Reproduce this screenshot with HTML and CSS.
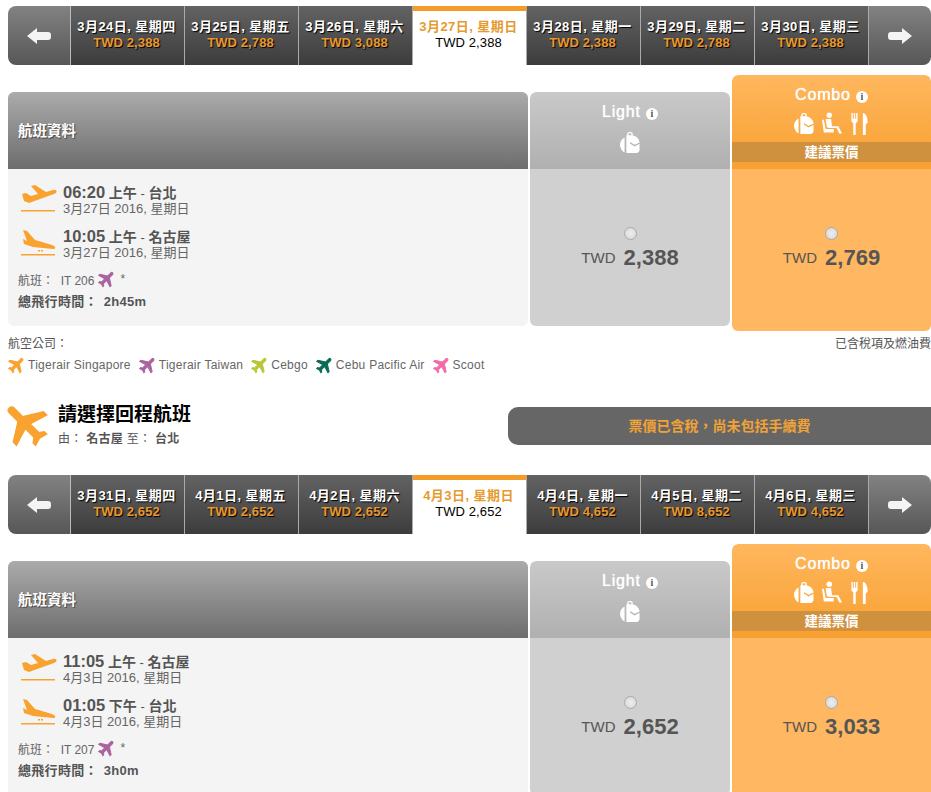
FILE: index.html
```html
<!DOCTYPE html>
<html lang="zh-Hant">
<head>
<meta charset="utf-8">
<title>航班</title>
<link rel="stylesheet" href="styles.css">
</head>
<body>
<svg class="defs" width="0" height="0">
  <defs>
    <symbol id="plane" viewBox="0 0 24 24"><path d="M21 16v-2l-8-5V3.5c0-.83-.67-1.5-1.500-1.500S10 2.670 10 3.500V9l-8 5v2l8-2.500V19l-2 1.500V22l3.500-1 3.500 1v-1.500L13 19v-5.500l8 2.500z"/></symbol>
    <symbol id="takeoff" viewBox="0 0 36 28"><path d="M1 9l4-1 5 3 7-2-7-8 4-1 11 7 7-2c2-.5 4 .5 3.500 2-.4 1.300-2 2-4 2.600L8 18 3 16z"/><rect y="25" width="34" height="1.500"/></symbol>
    <symbol id="landing" viewBox="0 0 36 28"><path d="M2 1l4 1 8 9 7 2c4 1 10 3 12 4 2 1 1.500 3-.5 3L12 18 3 15l-1-5 4 2z"/><rect x="17" y="21" width="2" height="1.500"/><rect x="20" y="21" width="2" height="1.500"/><rect y="25" width="34" height="1.500"/></symbol>
    <symbol id="bag" viewBox="0 0 22 24"><path fill-rule="evenodd" d="M8 4V2.500C8 1.300 9 .5 10 .5h2c1.200 0 2 .8 2 2V4.300c4 .7 7.500 3.700 7.500 8.200V20c0 2-1.500 3.500-3.500 3.500H7V4zM9.500 4h3V2.500c0-.4-.2-.6-.5-.6h-2c-.3 0-.5.2-.5.6zM11 11.500l5 3 5.500-2.500v1.500L16 16.500l-5-3.500z"/><path d="M5 6.500v16.500C2 21.500 0 18 0 14.500S2 8 5 6.500z"/></symbol>
    <symbol id="seat" viewBox="0 0 22 24"><circle cx="8" cy="3" r="3"/><path d="M4 7h6l1 8h7l4 8h-3l-3-6H8c-2 0-3-1-3-3z"/><path d="M0 8h2l2 10h9v4H2z"/></symbol>
    <symbol id="meal" viewBox="0 0 20 24"><path d="M1 1h1.500v6h1V1H5v6h1V1h1.500v8c0 1-1 2-2 2.500V24H3V11.500C2 11 1 10 1 9z"/><path d="M13 1c3 0 5 4 5 10l-2 2v11h-3z"/></symbol>
  </defs>
</svg>

<section class="leg">
  <nav class="dates">
    <a class="arrow arrow-left"><svg viewBox="0 0 24 18" class="arrow-icon"><path d="M0 9l10-8v4h11c2 0 3 1 3 3v2c0 2-1 3-3 3H10v4z"/></svg></a>
    <a class="date"><b>3月24日, 星期四</b><span>TWD 2,388</span></a>
    <a class="date"><b>3月25日, 星期五</b><span>TWD 2,788</span></a>
    <a class="date"><b>3月26日, 星期六</b><span>TWD 3,088</span></a>
    <a class="date active"><b>3月27日, 星期日</b><span>TWD 2,388</span></a>
    <a class="date"><b>3月28日, 星期一</b><span>TWD 2,388</span></a>
    <a class="date"><b>3月29日, 星期二</b><span>TWD 2,788</span></a>
    <a class="date"><b>3月30日, 星期三</b><span>TWD 2,388</span></a>
    <a class="arrow arrow-right"><svg viewBox="0 0 24 18" class="arrow-icon"><path d="M24 9l-10-8v4H3C1 5 0 6 0 8v2c0 2 1 3 3 3h11v4z"/></svg></a>
  </nav>
  <div class="fares">
    <div class="flight-col">
      <header class="flight-head">航班資料</header>
      <div class="flight-body">
        <div class="stop">
          <svg class="stop-icon"><use href="#takeoff"/></svg>
          <div class="stop-text"><div class="stop-line"><strong>06:20</strong> <em>上午</em> - <em>台北</em></div><div class="stop-date">3月27日 2016, 星期日</div></div>
        </div>
        <div class="stop">
          <svg class="stop-icon"><use href="#landing"/></svg>
          <div class="stop-text"><div class="stop-line"><strong>10:05</strong> <em>上午</em> - <em>名古屋</em></div><div class="stop-date">3月27日 2016, 星期日</div></div>
        </div>
        <div class="flight-no">航班：&nbsp; IT 206 <svg class="plane tw"><use href="#plane"/></svg> *</div>
        <div class="duration">總飛行時間： 2h45m</div>
      </div>
    </div>
    <div class="fare light">
      <header class="fare-head">
        <div class="fare-name">Light <i class="info">i</i></div>
        <div class="fare-icons"><svg class="ico"><use href="#bag"/></svg></div>
      </header>
      <div class="fare-body"><span class="radio"></span><div class="price"><small>TWD</small> 2,388</div></div>
    </div>
    <div class="fare combo">
      <header class="fare-head">
        <div class="fare-name">Combo <i class="info">i</i></div>
        <div class="fare-icons"><svg class="ico"><use href="#bag"/></svg><svg class="ico"><use href="#seat"/></svg><svg class="ico"><use href="#meal"/></svg></div>
        <div class="band">建議票價</div>
      </header>
      <div class="fare-body"><span class="radio"></span><div class="price"><small>TWD</small> 2,769</div></div>
    </div>
  </div>
  <div class="notes">
    <span>航空公司：</span><span>已含稅項及燃油費</span>
  </div>
  <ul class="airlines">
    <li><svg class="plane sg"><use href="#plane"/></svg>Tigerair Singapore</li>
    <li><svg class="plane tw"><use href="#plane"/></svg>Tigerair Taiwan</li>
    <li><svg class="plane cg"><use href="#plane"/></svg>Cebgo</li>
    <li><svg class="plane cp"><use href="#plane"/></svg>Cebu Pacific Air</li>
    <li><svg class="plane sc"><use href="#plane"/></svg>Scoot</li>
  </ul>
  <div class="return">
    <svg class="return-plane"><use href="#plane"/></svg>
    <div class="return-text">
      <h2>請選擇回程航班</h2>
      <p>由： <b>名古屋</b> 至： <b>台北</b></p>
    </div>
    <div class="tax-note">票價已含稅，尚未包括手續費</div>
  </div>
</section>

<section class="leg">
  <nav class="dates">
    <a class="arrow arrow-left"><svg viewBox="0 0 24 18" class="arrow-icon"><path d="M0 9l10-8v4h11c2 0 3 1 3 3v2c0 2-1 3-3 3H10v4z"/></svg></a>
    <a class="date"><b>3月31日, 星期四</b><span>TWD 2,652</span></a>
    <a class="date"><b>4月1日, 星期五</b><span>TWD 2,652</span></a>
    <a class="date"><b>4月2日, 星期六</b><span>TWD 2,652</span></a>
    <a class="date active"><b>4月3日, 星期日</b><span>TWD 2,652</span></a>
    <a class="date"><b>4月4日, 星期一</b><span>TWD 4,652</span></a>
    <a class="date"><b>4月5日, 星期二</b><span>TWD 8,652</span></a>
    <a class="date"><b>4月6日, 星期三</b><span>TWD 4,652</span></a>
    <a class="arrow arrow-right"><svg viewBox="0 0 24 18" class="arrow-icon"><path d="M24 9l-10-8v4H3C1 5 0 6 0 8v2c0 2 1 3 3 3h11v4z"/></svg></a>
  </nav>
  <div class="fares">
    <div class="flight-col">
      <header class="flight-head">航班資料</header>
      <div class="flight-body">
        <div class="stop">
          <svg class="stop-icon"><use href="#takeoff"/></svg>
          <div class="stop-text"><div class="stop-line"><strong>11:05</strong> <em>上午</em> - <em>名古屋</em></div><div class="stop-date">4月3日 2016, 星期日</div></div>
        </div>
        <div class="stop">
          <svg class="stop-icon"><use href="#landing"/></svg>
          <div class="stop-text"><div class="stop-line"><strong>01:05</strong> <em>下午</em> - <em>台北</em></div><div class="stop-date">4月3日 2016, 星期日</div></div>
        </div>
        <div class="flight-no">航班：&nbsp; IT 207 <svg class="plane tw"><use href="#plane"/></svg> *</div>
        <div class="duration">總飛行時間： 3h0m</div>
      </div>
    </div>
    <div class="fare light">
      <header class="fare-head">
        <div class="fare-name">Light <i class="info">i</i></div>
        <div class="fare-icons"><svg class="ico"><use href="#bag"/></svg></div>
      </header>
      <div class="fare-body"><span class="radio"></span><div class="price"><small>TWD</small> 2,652</div></div>
    </div>
    <div class="fare combo">
      <header class="fare-head">
        <div class="fare-name">Combo <i class="info">i</i></div>
        <div class="fare-icons"><svg class="ico"><use href="#bag"/></svg><svg class="ico"><use href="#seat"/></svg><svg class="ico"><use href="#meal"/></svg></div>
        <div class="band">建議票價</div>
      </header>
      <div class="fare-body"><span class="radio"></span><div class="price"><small>TWD</small> 3,033</div></div>
    </div>
  </div>
</section>
</body>
</html>
```
FILE: styles.css
```css
* { box-sizing: border-box; }
html, body { margin: 0; height: 792px; overflow: hidden; background: #fff; }
body { font-family: "Liberation Sans", "Noto Sans CJK TC", sans-serif; color: #555; font-size: 12px; }
.defs { position: absolute; }

.leg { padding: 6px 0 0 8px; }

/* date bar */
.dates { display: grid; grid-template-columns: 63px repeat(7, 114px) 62px; height: 59px; }
.arrow { display: flex; align-items: center; justify-content: center; background: linear-gradient(#828282, #575757); }
.arrow-left { border-radius: 8px 0 0 8px; border-right: 1px solid #bbb; }
.arrow-right { border-radius: 0 8px 8px 0; }
.arrow-icon { width: 24px; height: 18px; fill: #f4f4f4; }
.date { display: flex; flex-direction: column; align-items: center; padding: 13px 2px 0 0; background: linear-gradient(#636363, #3c3c3c); border-right: 1px solid #aaa; line-height: 15px; white-space: nowrap; }
.date b { color: #fff; font-size: 13px; letter-spacing: .45px; text-shadow: 1px 1px 1px #000; }
.date span { color: #e8982f; font-size: 13px; letter-spacing: .1px; font-weight: bold; text-shadow: 1px 1px 1px #000; margin-top: 1px; }
.date.active { background: #fff; border-top: 5px solid #f39c2a; padding-top: 8px; }
.date.active b { color: #e59a2e; text-shadow: none; }
.date.active span { color: #000; font-weight: normal; text-shadow: none; }

/* fare table */
.fares { display: grid; grid-template-columns: 520px 200px 199px; column-gap: 2px; margin-top: 10px; align-items: start; }
.flight-col { margin-top: 17px; }
.flight-head { height: 77px; display: flex; align-items: center; padding: 0 0 2px 10px; color: #fff; font-size: 14.5px; font-weight: bold; border-radius: 6px 6px 0 0; background: linear-gradient(#ababab, #6d6d6d); text-shadow: 1px 1px 1px #444; }
.flight-body { height: 157px; padding: 8px 10px 0; background: #f4f4f4; border-radius: 0 0 6px 6px; }
.stop { display: flex; align-items: center; height: 44px; }
.stop-icon { width: 36px; height: 28px; margin: 0 6px 0 3px; fill: #f9a22f; flex: none; }
.stop-line { font-size: 13px; line-height: 16px; color: #555; white-space: nowrap; }
.stop-line strong { font-size: 16.5px; }
.stop-line em { font-style: normal; font-size: 14px; font-weight: bold; }
.stop-date { font-size: 13px; line-height: 13px; color: #666; }
.flight-no { display: flex; align-items: center; gap: 4px; height: 18px; margin-top: 5px; color: #666; }
.duration { margin-top: 5px; font-size: 13px; font-weight: bold; color: #555; letter-spacing: .3px; word-spacing: 2px; line-height: 18px; }

.plane { width: 20px; height: 20px; margin: -1px; transform: rotate(45deg); flex: none; fill: currentColor; stroke: currentColor; stroke-width: 1.2; }
.plane.sg { color: #f9a22f; }
.plane.tw { color: #a9639f; }
.plane.cg { color: #b9c63a; }
.plane.cp { color: #0c6b55; }
.plane.sc { color: #f26ca7; }

.fare { text-align: center; overflow: hidden; }
.fare-head { display: flex; flex-direction: column; align-items: center; border-radius: 6px 6px 0 0; color: #fff; font-size: 16px; }
.fare-name { line-height: 18px; letter-spacing: .8px; text-shadow: 0 0 1px #fff; }
.info { display: inline-block; width: 12px; height: 12px; border-radius: 50%; background: #fff; color: #555; font: bold 10px/12px "Liberation Serif", serif; letter-spacing: 0; text-shadow: none; text-align: center; }
.fare-icons { display: flex; justify-content: center; gap: 8px; }
.ico { width: 20px; height: 23px; fill: #fff; }
.fare-body { display: flex; flex-direction: column; align-items: center; padding-top: 58px; }
.radio { width: 13px; height: 13px; border-radius: 50%; background: radial-gradient(#eee, #d4d4d4); border: 1px solid #aaa; }
.price { margin-top: 3px; font-size: 22px; line-height: 30px; font-weight: bold; color: #555; white-space: nowrap; }
.price small { font-size: 15px; font-weight: normal; margin-right: 2px; position: relative; top: -2px; }

.light { margin-top: 17px; border-radius: 6px; }
.light .fare-head { height: 77px; padding-top: 11px; background: linear-gradient(#c9c9c9, #b0b0b0); }
.light .fare-icons { margin-top: 10px; }
.light .fare-body { height: 157px; background: #d0d0d0; }
.combo { border-radius: 6px; }
.combo .fare-head { height: 94px; padding-top: 11px; background: linear-gradient(#ffb75e, #f8a030); border-radius: 6px 6px 0 0; }
.combo .fare-icons { margin-top: 8px; }
.combo .fare-body { height: 162px; background: #ffb761; }
.band { width: 100%; height: 20px; margin-top: 7px; background: #cf913e; font-size: 13.5px; font-weight: bold; line-height: 22px; }

/* below the table */
.notes { display: flex; justify-content: space-between; margin-top: 6px; line-height: 14px; color: #555; }
.airlines { display: flex; gap: 8px; margin: 5px 0 0; padding: 0; list-style: none; height: 18px; color: #666; letter-spacing: .25px; }
.airlines li { display: flex; align-items: center; gap: 2px; }
.return { display: flex; align-items: center; height: 56px; margin: 24px 0 15px; }
.return-plane { width: 54px; height: 54px; margin: -6px 0 0 -9px; transform: rotate(-45deg); fill: #f9a22f; stroke: #f9a22f; stroke-width: .6; flex: none; }
.return-text { margin-left: 5px; width: 450px; flex: none; }
.return-text h2 { margin: 0; font-size: 19px; line-height: 18px; color: #000; font-weight: bold; }
.return-text p { margin: 7px 0 0; font-size: 12px; line-height: 16px; color: #555; letter-spacing: .3px; }
.tax-note { width: 423px; height: 38px; line-height: 38px; text-align: center; background: #666; color: #f0a238; font-size: 14px; font-weight: bold; border-radius: 10px 0 0 10px; margin-left: auto; }
```
